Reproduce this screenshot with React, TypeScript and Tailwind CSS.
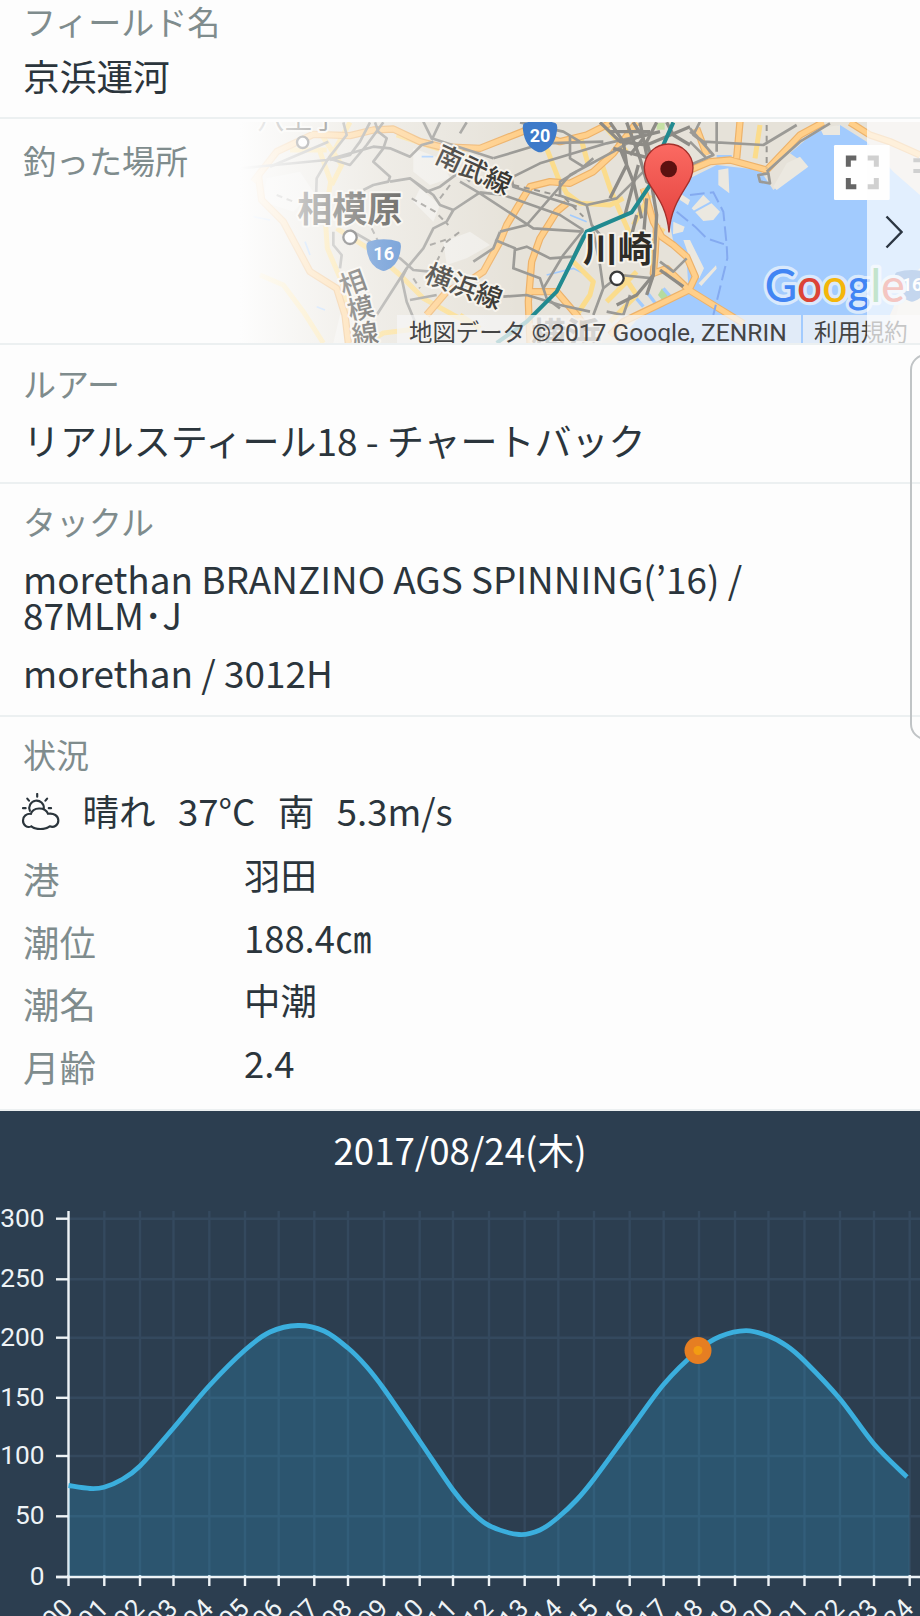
import type { ReactNode } from 'react';

const conditions = [
  { label: '港', value: '羽田' },
  { label: '潮位', value: '188.4㎝' },
  { label: '潮名', value: '中潮' },
  { label: '月齢', value: '2.4' },
];

const hourX = [
  68.5, 104.3, 140, 173.5, 209.3, 245, 278.7, 314.3, 348, 384, 419.7, 453, 489,
  524.7, 558.3, 594, 629.7, 663.7, 699, 735, 768.5, 804.5, 840, 874, 909.7,
];

const hours = hourX.map((x, i) => ({ x, label: String(i).padStart(2, '0') }));

const yTicks = [
  { value: 300, y: 1218.7 },
  { value: 250, y: 1279.3 },
  { value: 200, y: 1337.7 },
  { value: 150, y: 1397.8 },
  { value: 100, y: 1456 },
  { value: 50, y: 1516.3 },
  { value: 0, y: 1577 },
];

const tide: [number, number][] = [
  [68.5, 1485.5], [90, 1488.5], [104, 1487.3], [121, 1480], [140, 1466], [173.5, 1428], [209, 1386],
  [245, 1350], [270, 1332], [298, 1325.5], [324, 1331], [348, 1348], [366, 1366], [384, 1389],
  [419.7, 1441], [453, 1490], [470, 1510], [489, 1525.5], [519, 1534.5], [540, 1530], [558, 1517.5],
  [577, 1499.5], [594, 1479], [630, 1430], [664, 1384], [698, 1350.5], [720, 1336.5], [746, 1330.7],
  [768.5, 1336], [787, 1346], [804.5, 1361], [840, 1399], [874, 1444], [907, 1477],
];

function smooth(points: [number, number][]) {
  let d = `M${points[0][0]} ${points[0][1]}`;
  for (let i = 0; i < points.length - 1; i++) {
    const p0 = points[i - 1] ?? points[i];
    const p1 = points[i];
    const p2 = points[i + 1];
    const p3 = points[i + 2] ?? p2;
    d += ` C${p1[0] + (p2[0] - p0[0]) / 6} ${p1[1] + (p2[1] - p0[1]) / 6} ${p2[0] - (p3[0] - p1[0]) / 6} ${p2[1] - (p3[1] - p1[1]) / 6} ${p2[0]} ${p2[1]}`;
  }
  return d;
}

function Section({ label, className, children }: { label: string; className: string; children?: ReactNode }) {
  return (
    <section className={`relative border-b-2 border-[#ecf0f1] px-[23px] ${className}`}>
      <h2 className="text-[33px] leading-9 text-[#7f8c8d]">{label}</h2>
      {children}
    </section>
  );
}

function Shield({ x, y, label }: { x: number; y: number; label: string }) {
  return (
    <g transform={`translate(${x} ${y})`}>
      <path
        d="M-46 -38 Q0 -52 46 -38 Q54 -34 51 -16 Q45 34 8 48 Q0 52 -8 48 Q-45 34 -51 -16 Q-54 -34 -46 -38Z"
        fill="#3d7ac9"
      />
      <text y="18" textAnchor="middle" fontSize="54" fontWeight="700" fill="#fff" fontFamily="Roboto, sans-serif">
        {label}
      </text>
    </g>
  );
}

function WeatherIcon() {
  return (
    <svg viewBox="64 50 116 112" className="-ml-[2px] h-[37px] w-[39px]" fill="none" stroke="#2b353c" strokeWidth="6.5" strokeLinecap="round">
      <path d="M112 53v8M82 67l5 6M142 67l-5 6M69 96h8M147 96h7" />
      <path d="M90 104a22 22 0 1 1 42 -7" />
      <path d="M93 113C99 93 135 90 145 113C162 110 176 119 176 133C176 147 163 156 150 151C137 162 106 162 94 151C81 157 69 147 69 133C69 120 80 112 93 113Z" />
    </svg>
  );
}

function MapView() {
  return (
    <svg viewBox="0 21 2040 663" className="h-full w-full" fontFamily='"Noto Sans CJK JP", sans-serif'>
      <defs>
        <linearGradient id="fade" x1="0" x2="1">
          <stop offset="0" stopColor="#fdfdfd" />
          <stop offset="0.12" stopColor="#fdfdfd" stopOpacity="0.85" />
          <stop offset="0.5" stopColor="#fdfdfd" stopOpacity="0.4" />
          <stop offset="1" stopColor="#fdfdfd" stopOpacity="0" />
        </linearGradient>
        <linearGradient id="pin" x1="0" y1="0" x2="0" y2="1">
          <stop offset="0" stopColor="#fb6a62" />
          <stop offset="1" stopColor="#e2403c" />
        </linearGradient>
      </defs>
      <rect y="21" width="2040" height="663" fill="#e6e2d9" />

      {/* Parks and hills */}
      <g fill="#efede8">
        <path d="M520 100l80 30 30 60-60 20-50-40zM540 220l60 50-20 50-60-60zM610 380l80-30 60 40-70 40-60 20z" />
        <path d="M80 190l100-20 40 60-60 60-90-30zM300 600l100 20v64H280z" />
      </g>

      {/* Bay */}
      <path
        d="M1350 190L1430 150 1560 165 1600 225 1700 150 1650 115 1720 55 1800 30 1880 80 1960 170 2040 240V460L1990 510 1950 600 1960 684H1130L1190 615 1300 550 1345 510 1340 440 1300 380 1290 330 1310 250Z"
        fill="#a2cbfe"
      />
      <g fill="#ebe8e0">
        <path d="M1355 280l35-40 50 50-20 25-30 3zM1435 165l30-5 3 75-33-25zM1600 215l40-70 40-20 25 30-95 70zM1740 40l60-10 0 30-50 0z" />
        <path d="M1330 375l20 0 42 85-14 30-18-30zM1376 505l52-54 2 10-46 52zM1300 320l34 15-5 15-30 8zM1320 235l30 20-6 16-24-16z" />
        <path d="M1990 510l50-50v224h-90z" />
      </g>
      <path d="M1266 520l20 20-16 20-16-20z" fill="#b5dba0" />
      <path d="M1250 24h24v20h-24z" fill="#c5e0a5" />
      <g stroke="#a2cbfe" strokeWidth="10" fill="none">
        <path d="M1210 575l-30-35M1250 570l-30-40M1300 555l-30-35M1430 125h45M1160 684l130-74" />
        <path d="M545 125h35M920 480l80-20 50 25M195 380l15 40M230 575l25 10M40 305l50 10M990 300l50 20" strokeWidth="5" />
      </g>
      <path d="M1358 292l70-38" stroke="#a2cbfe" strokeWidth="6" />

      {/* Local roads */}
      <g fill="none" stroke="#fbdc8c" strokeWidth="15" strokeLinejoin="round">
        <path d="M240 110L272 200 255 300 262 400 305 500 330 600M290 340L400 410 480 480 550 550 640 600 700 630M60 480L130 510 190 590 250 684" />
        <path d="M150 105h110M245 60l60 90-30 60M380 684l50-30 80-10M330 22L270 130M470 60L560 90 690 130" />
        <path d="M920 100L955 190 980 235 1020 265 1110 270 1150 250M1020 60L1045 150M1000 440L1060 500 1050 540 1010 600M1080 130L1110 220 1140 290 1180 380M660 600L720 640" />
        <path d="M1560 30L1545 130M1150 480l40 60-80 80M1100 560l90-90M1210 440l60-100M1230 240L1180 330M1100 40L1160 110" />
      </g>

      {/* Highways */}
      <g fill="none" strokeLinejoin="round">
        {['#edb26a', '#ffcf8a'].map((color, i) => (
          <g key={color} stroke={color} strokeWidth={i === 0 ? 22 : 15}>
            <path d="M40 200L110 110 220 58 330 62 400 45 460 42 540 80 600 95 720 100 860 45 960 80 1040 60 1110 25" />
            <path d="M55 180L65 255 130 320 210 470 290 520 315 600 325 684" />
            <path d="M560 600L620 530 700 490 730 470 780 380 800 330 830 280 870 215 930 200 990 205 1060 170 1120 115 1170 50 1190 22" />
            <path d="M870 684L865 560 875 440 900 370 950 290 980 265M870 530H950L1010 600 1040 640" />
            <path d="M1210 220L1240 320 1265 365 1300 390 1340 425 1366 485 1347 525 1250 572 1150 620 1110 660" />
            <path d="M1250 330L1245 420 1240 475 1280 460 1347 525 1420 570 1510 625" />
            <path d="M1350 165L1410 140 1470 135 1580 165 1680 60 1750 22M1500 20L1490 130M1370 40L1400 120M1830 22L1890 60 1950 80 2040 120" />
          </g>
        ))}
      </g>

      {/* Railways */}
      <g fill="none" stroke="#9b9a96" strokeWidth="8" strokeLinejoin="round">
        <path d="M0 160L260 135 400 95 450 100 510 125 545 90 580 80M310 22L320 60 265 130M390 22L360 80 330 120 270 135M430 22L380 90 330 150 265 130" />
        <path d="M405 22L415 50 440 70 430 100 400 140 450 185 445 200 400 210 370 225M265 130L230 190 228 250M90 155L265 80" />
        <path d="M450 200L510 190 580 240 600 270 640 285 720 232M510 190L560 230 600 215 660 170 690 200M640 285L620 320 580 340 550 400 500 460 410 600" />
        <path d="M500 460L485 490 500 560 525 620M510 555L590 540M280 350V390L305 420 300 460M330 345L400 385 480 430 520 465 570 470M550 20L575 70 760 130M575 75L600 22" />
        <path d="M760 130L910 85 1090 80M820 185L900 145 1100 85 1210 60M815 190L820 215 1010 275M720 232L790 240 960 300 1030 345M660 200L720 235 880 340 1030 350" />
        <path d="M660 55L680 22M780 350L860 330 990 180 1120 110 1220 50M700 440L760 400 780 350M765 375L825 400 820 460 900 490 920 550 960 580M825 405L860 395 930 430 1000 425 1030 360" />
        <path d="M790 545L860 540 960 570 1050 590M955 240L1040 270 1130 250 1220 160M960 240L960 200 1010 170M990 60L990 130 1030 155 1060 130M840 22L970 50 1020 80" />
        <path d="M1030 345L970 420 910 520M1040 270L1055 330 1090 370M1060 350L1080 450 1090 520 1060 600M1090 520L1140 480 1240 490M1100 590L1150 600 1170 540M1260 440L1300 470 1340 430" />
        <path d="M1350 50L1390 80 1570 90 1670 30M1350 40L1420 120 1350 150M1430 20V110M1380 20L1360 60 1400 90M1350 80L1400 130M1580 170L1680 80 1770 25M1555 180L1585 175 1590 205 1560 200Z" />
      </g>
      <g fill="none" stroke="#8d8b86" strokeWidth="10" strokeLinejoin="round">
        <path d="M1080 22L1140 80 1260 50M1110 22L1150 80 1160 150 1110 250M1160 22L1200 130 1220 200 1250 220M1140 100L1180 200 1205 310" />
        <path d="M1200 22L1220 120 1250 300 1240 480 1220 540M1140 80L1220 90 1350 35M1180 22L1210 70 1170 120M1250 22L1220 80 1240 150M1110 50H1230M1120 100L1230 130M1280 22L1300 60 1350 90" />
        <path d="M1190 300L1160 420M1220 250L1210 370M1260 465L1330 515M1240 480L1190 540 1130 570M1195 150L1155 300" />
      </g>
      <g fill="none" stroke="#999792" strokeWidth="6" strokeDasharray="18 14">
        <path d="M515 250l70 40 40 40M570 390l60-20M590 440l30-60 40-30M110 240l50 20M395 340l20 40M600 250l30-40M820 210l150 35 60 60M1580 30v130M520 490l20 30" />
      </g>
      <path d="M1350 240L1420 232 1450 290 1460 390 1462 430 1420 600M1365 335L1400 370 1460 390M1310 290L1365 335" fill="none" stroke="#84aaf0" strokeWidth="6" strokeDasharray="44 16" />
      <path d="M1300 22L1270 90 1230 210 1175 292 1040 350 1000 430 950 530 860 620 770 684" fill="none" stroke="#218a90" strokeWidth="12" />

      {/* Place names */}
      <g fill="#2e2c27" stroke="#f6f3ec" strokeWidth="12" strokeLinejoin="round" paintOrder="stroke">
        <text x="52" y="42" fontSize="82">八王子</text>
        <text x="172" y="320" fontSize="105" fontWeight="700">相模原</text>
        <text x="1028" y="440" fontSize="105" fontWeight="700">川崎</text>
        <text x="874" y="700" fontSize="105" fontWeight="700" opacity="0.6">横浜</text>
        <g fontSize="80" fontWeight="500" textAnchor="middle">
          <text transform="translate(702 162) rotate(25)" y="31">南武線</text>
          <text transform="translate(672 512) rotate(21)" y="31">横浜線</text>
          <text transform="translate(338 503) rotate(-20)" y="30">相</text>
          <text transform="translate(362 580) rotate(-14)" y="30">模</text>
          <text transform="translate(375 656) rotate(-8)" y="30">線</text>
        </g>
      </g>
      <g fill="#fff" stroke="#3a3a3a" strokeWidth="7">
        <circle cx="188" cy="82" r="17" />
        <circle cx="330" cy="367" r="20" />
        <circle cx="1131" cy="490" r="20" />
      </g>
      <Shield x={431} y={418} label="16" />
      <Shield x={900} y={62} label="20" />
      <Shield x={2016} y={510} label="16" />

      {/* Pin */}
      <path
        d="M1287 352C1282 290 1260 255 1233 215C1220 195 1213 178 1213 158A73 71 0 0 1 1359 158C1359 178 1351 195 1338 215C1313 255 1292 290 1287 352Z"
        fill="url(#pin)"
        stroke="#a3302b"
        strokeWidth="4"
      />
      <circle cx="1286" cy="162" r="25" fill="#5c1110" />

      {/* Fullscreen control */}
      <rect x="1782" y="90" width="167" height="165" rx="4" fill="#fff" />
      <path d="M1825 155V129H1849M1883 129H1909V155M1909 189V215H1883M1849 215H1825V189" fill="none" stroke="#666" strokeWidth="15" />
      <path d="M2020 136h20M2020 168h20" stroke="#666" strokeWidth="12" />

      <text
        x="1574"
        y="560"
        fontSize="138"
        fontWeight="500"
        fontFamily="Lato, sans-serif"
        textLength="420"
        lengthAdjust="spacingAndGlyphs"
        stroke="#d9e9fc"
        strokeWidth="20"
        strokeLinejoin="round"
        paintOrder="stroke"
      >
        <tspan fill="#4285f4">G</tspan>
        <tspan fill="#dc4437">o</tspan>
        <tspan fill="#f4b60b">o</tspan>
        <tspan fill="#4285f4">g</tspan>
        <tspan fill="#3aa757">l</tspan>
        <tspan fill="#dc4437">e</tspan>
      </text>
      <rect y="21" width="840" height="663" fill="url(#fade)" />
    </svg>
  );
}

function TideChart() {
  const line = smooth(tide);

  return (
    <svg viewBox="0 1166 920 450" className="block h-[450px] w-full" fontFamily="Roboto, sans-serif" fill="#eef3f6">
      <g stroke="#34495e" strokeWidth="2.4">
        {hours.map(h => (
          <path key={h.label} d={`M${h.x} 1211V1577`} />
        ))}
        {yTicks.map(t => (
          <path key={t.value} d={`M68.5 ${t.y}H920`} />
        ))}
      </g>

      {/* Axes */}
      <g stroke="#eef3f6" strokeWidth="2.4">
        <path d="M68.5 1211V1577M56 1577H920" />
        {yTicks.map(t => (
          <path key={t.value} d={`M56 ${t.y}H68.5`} />
        ))}
        {hours.map(h => (
          <path key={h.label} d={`M${h.x} 1575V1586`} />
        ))}
      </g>

      <path d={`${line} L909.5 1479V1576H68.5Z`} fill="#2fa8e0" fillOpacity="0.22" />
      <path d={line} fill="none" stroke="#3bafde" strokeWidth="4.8" />
      <circle cx="698" cy="1350.5" r="13.5" fill="#e67e22" />
      <circle cx="698" cy="1350.5" r="4.5" fill="#f39c12" />

      {yTicks.map(t => (
        <text key={t.value} x="44.5" y={t.y + 8} fontSize="26.3" textAnchor="end">
          {t.value}
        </text>
      ))}
      {hours.map(h => (
        <text key={h.label} transform={`translate(${h.x + 5.5} 1610) rotate(-45)`} fontSize="26" textAnchor="end">
          {h.label}
        </text>
      ))}
    </svg>
  );
}

export default function App() {
  return (
    <main className="relative h-[1616px] w-[920px] overflow-hidden bg-[#fdfdfd] font-['Noto_Sans_CJK_JP',sans-serif] text-[36.7px] leading-9 text-[#2b353c]">
      <Section label="フィールド名" className="h-[119px] pt-[3px]">
        <p className="mt-[18px]">京浜運河</p>
      </Section>

      <Section label="釣った場所" className="h-[226px] pt-[23px]">
        <div className="absolute top-[3px] right-0 h-[221px] w-[680px] overflow-hidden">
          <MapView />
          <div className="absolute right-0 bottom-0 flex h-[28px] w-[523px] gap-[2px] font-[Roboto,'Noto_Sans_CJK_JP',sans-serif] text-[23.4px] leading-[36px] whitespace-nowrap text-[#444]">
            <span className="w-[404px] bg-[#f5f5f5]/75 pl-[12px]">
              地図データ <span className="text-[24.6px]">©2017 Google, ZENRIN</span>
            </span>
            <span className="flex-1 bg-[#f5f5f5]/75 pl-[11px]">利用規約</span>
          </div>
          <div className="absolute inset-y-0 right-0 flex w-[53px] items-center justify-center bg-[#fdfdfd]/70">
            <svg viewBox="0 0 18 34" className="relative -top-px h-[34px] w-[18px]" fill="none" stroke="#2c3642" strokeWidth="2.4">
              <path d="M1.5 1.5L16.5 17 1.5 32.5" />
            </svg>
          </div>
        </div>
      </Section>

      <Section label="ルアー" className="h-[139px] pt-5">
        <p className="mt-[21px] text-[37px]">リアルスティール18 - チャートバック</p>
      </Section>

      <Section label="タックル" className="h-[233px] pt-[19px]">
        <p className="mt-[21px] text-[36.9px]">
          morethan BRANZINO AGS SPINNING(’16) / <span className="inline-block">87MLM･J</span>
        </p>
        <p className="mt-[22px] text-[36.9px]">morethan / 3012H</p>
      </Section>

      <Section label="状況" className="h-[394px] pt-[19px]">
        <div className="mt-5 flex items-center gap-[22.5px] text-[36.5px]">
          <span className="relative top-px">
            <WeatherIcon />
          </span>
          <span>晴れ</span>
          <span>37°C</span>
          <span>南</span>
          <span>5.3m/s</span>
        </div>
        <dl className="mt-[27px] text-[36.4px]">
          {conditions.map(c => (
            <div key={c.label} className="flex h-[62.5px]">
              <dt className="w-[221px] pt-1 text-[#7f8c8d]">{c.label}</dt>
              <dd>{c.value}</dd>
            </div>
          ))}
        </dl>
      </Section>

      <section className="h-[505px] bg-[#2c3e50] pt-[19px] text-white">
        <h2 className="relative top-px text-center">2017/08/24(木)</h2>
        <TideChart />
      </section>

      {/* Edge of the side drawer */}
      <div className="absolute top-[354px] -right-5 h-[386px] w-[30px] rounded-l-2xl border-2 border-[#c0c4c6]" />
    </main>
  );
}
